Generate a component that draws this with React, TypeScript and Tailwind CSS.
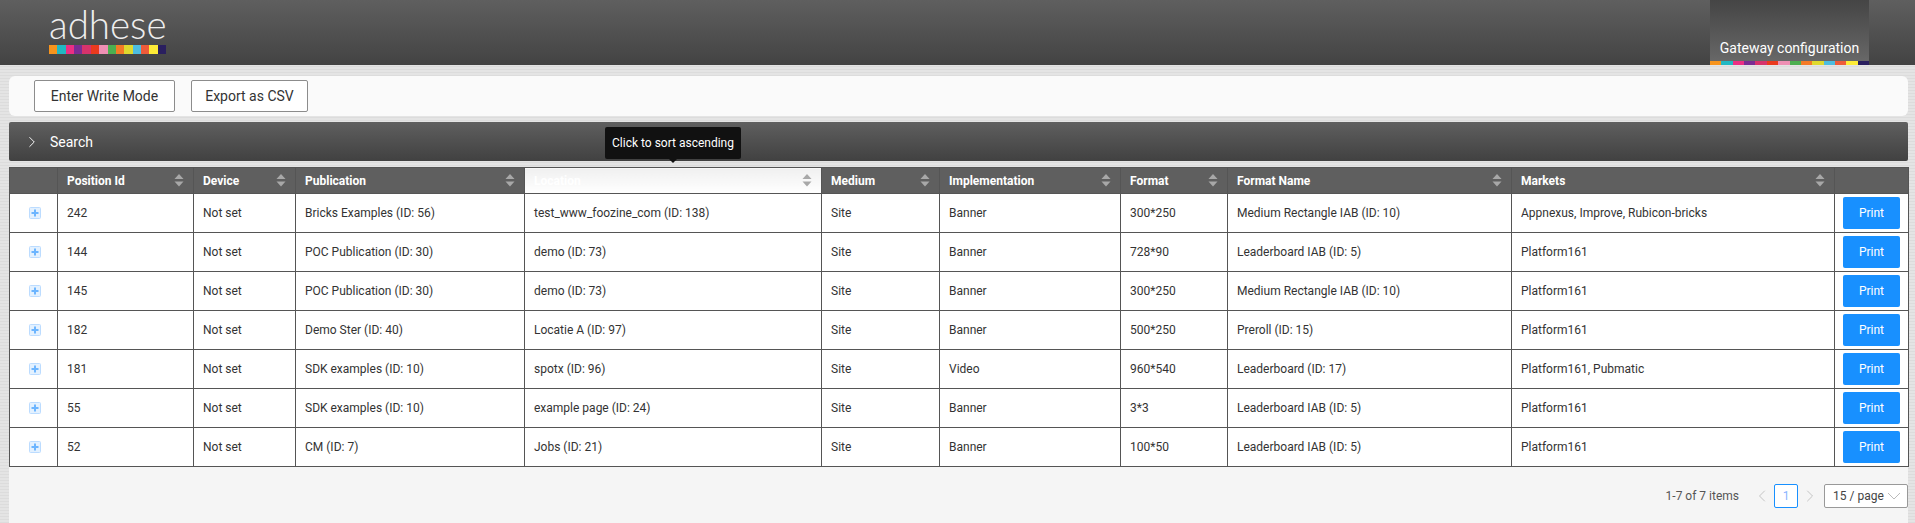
import React from 'react'
import { ChevronLeft, ChevronRight } from 'lucide-react'

const stripe = ['bg-[#f7941d]', 'bg-[#21b8c3]', 'bg-[#ec2f83]', 'bg-[#7b2d93]', 'bg-[#d6336c]', 'bg-[#ea3a1e]', 'bg-[#ee8fb4]', 'bg-[#4caf50]', 'bg-[#f47a26]', 'bg-[#dfd92e]', 'bg-[#4dbde0]', 'bg-[#ee5b3a]', 'bg-[#fdeb37]', 'bg-[#2a1f5f]']

const columns = [
  { name: '', width: 'w-[48px]' },
  { name: 'Position Id', width: 'w-[136px]' },
  { name: 'Device', width: 'w-[102px]' },
  { name: 'Publication', width: 'w-[229px]' },
  { name: 'Location', width: 'w-[297px]' },
  { name: 'Medium', width: 'w-[118px]' },
  { name: 'Implementation', width: 'w-[181px]' },
  { name: 'Format', width: 'w-[107px]' },
  { name: 'Format Name', width: 'w-[284px]' },
  { name: 'Markets', width: 'w-[323px]' },
  { name: '', width: 'w-[74px]' },
]

const rows = [
  ['242', 'Not set', 'Bricks Examples (ID: 56)', 'test_www_foozine_com (ID: 138)', 'Site', 'Banner', '300*250', 'Medium Rectangle IAB (ID: 10)', 'Appnexus, Improve, Rubicon-bricks'],
  ['144', 'Not set', 'POC Publication (ID: 30)', 'demo (ID: 73)', 'Site', 'Banner', '728*90', 'Leaderboard IAB (ID: 5)', 'Platform161'],
  ['145', 'Not set', 'POC Publication (ID: 30)', 'demo (ID: 73)', 'Site', 'Banner', '300*250', 'Medium Rectangle IAB (ID: 10)', 'Platform161'],
  ['182', 'Not set', 'Demo Ster (ID: 40)', 'Locatie A (ID: 97)', 'Site', 'Banner', '500*250', 'Preroll (ID: 15)', 'Platform161'],
  ['181', 'Not set', 'SDK examples (ID: 10)', 'spotx (ID: 96)', 'Site', 'Video', '960*540', 'Leaderboard (ID: 17)', 'Platform161, Pubmatic'],
  ['55', 'Not set', 'SDK examples (ID: 10)', 'example page (ID: 24)', 'Site', 'Banner', '3*3', 'Leaderboard IAB (ID: 5)', 'Platform161'],
  ['52', 'Not set', 'CM (ID: 7)', 'Jobs (ID: 21)', 'Site', 'Banner', '100*50', 'Leaderboard IAB (ID: 5)', 'Platform161'],
]

function SortArrows() {
  return (
    <svg width="10" height="13" viewBox="0 0 10 13" className="shrink-0">
      <path d="M5 0 L9.5 5 H0.5 Z" fill="#a8a8a8" />
      <path d="M5 12.5 L9.5 7.5 H0.5 Z" fill="#a8a8a8" />
    </svg>
  )
}

function ExpandIcon() {
  return (
    <svg width="12" height="12" viewBox="0 0 12 12" className="block">
      <rect x="0.5" y="0.5" width="11" height="11" rx="1" fill="#e3f1ff" stroke="#bcdcff" />
      <path d="M6 2.5 V9.5 M2.5 6 H9.5" stroke="#6cb5ff" strokeWidth="2" />
    </svg>
  )
}

function Header() {
  return (
    <header className="flex h-[65px] justify-between bg-gradient-to-b from-[#5f5f5f] to-[#434343] pl-[49px] pr-[46px]">
      <div className="w-[117px] pt-[2px]">
        <div className="h-[43px] text-center font-['Lato'] text-[38.5px] leading-[44px] font-light text-[#eeeeee]">adhese</div>
        <div className="flex h-[9px]">
          {stripe.map((c, i) => <span key={i} className={`flex-1 ${c}`} />)}
        </div>
      </div>
      <div className="flex w-[159px] flex-col justify-end bg-gradient-to-b from-[#454545] to-[#6a6a6a]">
        <div className="pb-[3px] text-center text-[14px] leading-[20px] text-white">Gateway configuration</div>
        <div className="flex h-[4px]">
          {stripe.map((c, i) => <span key={i} className={`flex-1 ${c}`} />)}
        </div>
      </div>
    </header>
  )
}

function Toolbar() {
  return (
    <div className="flex h-[40px] items-center gap-[16px] rounded-[6px] bg-[#fafafa] pl-[25px]">
      <button className="h-[32px] w-[141px] rounded-[2px] border border-[#8c8c8c] bg-white text-[14px] text-[#333]">Enter Write Mode</button>
      <button className="h-[32px] w-[117px] rounded-[2px] border border-[#8c8c8c] bg-white text-[14px] text-[#333]">Export as CSV</button>
    </div>
  )
}

function SearchBar() {
  return (
    <div className="mt-[6px] flex h-[39px] items-center rounded-[2px] bg-gradient-to-b from-[#5f5f5f] to-[#414141] pt-[1px] pl-[14px] text-[14px] text-white">
      <ChevronRight size={18} strokeWidth={1.25} className="mr-[9px]" />
      Search
    </div>
  )
}

function DataTable() {
  return (
    <div className="relative mt-[6px] bg-[#f5f5f5] pb-[64px]">
      <table className="w-full table-fixed border-collapse text-[12px] text-[#333]">
        <colgroup>
          {columns.map((c, i) => <col key={i} className={c.width} />)}
        </colgroup>
        <thead>
          <tr className="h-[26px]">
            {columns.map((c, i) => (
              <th
                key={i}
                className={`border border-[#555] px-[9px] text-left font-bold ${c.name === 'Location' ? 'bg-gradient-to-b from-[#f0f0f0] to-white text-white' : 'bg-[#5f5f5f] text-white'}`}
              >
                {c.name && (
                  <div className="flex items-center justify-between">
                    {c.name}
                    <SortArrows />
                  </div>
                )}
              </th>
            ))}
          </tr>
        </thead>
        <tbody className="bg-white">
          {rows.map((r) => (
            <tr key={r[0]} className="h-[39px]">
              <td className="border border-[#555] pl-[2px]">
                <div className="flex justify-center"><ExpandIcon /></div>
              </td>
              {r.map((v, i) => <td key={i} className="truncate border border-[#555] px-[9px]">{v}</td>)}
              <td className="border border-[#555] text-center">
                <button className="h-[32px] w-[57px] rounded-[2px] bg-[#1890ff] text-[12px] text-white">Print</button>
              </td>
            </tr>
          ))}
        </tbody>
      </table>

      <div className="absolute top-[-40px] left-[596px] flex h-[32px] w-[136px] items-center justify-center rounded-[2px] bg-[#111] text-[12px] text-white">
        Click to sort ascending
        <span className="absolute bottom-[-4px] left-[64px] h-0 w-0 border-x-[4px] border-t-[4px] border-x-transparent border-t-[#111]" />
      </div>

      <div className="mt-[17px] flex h-[24px] items-center justify-end text-[12px] text-[#555]">
        <span className="mr-[13px]">1-7 of 7 items</span>
        <ChevronLeft size={20} strokeWidth={1} className="text-[#bbb]" />
        <span className="mx-[2px] flex h-[24px] w-[24px] items-center justify-center rounded-[2px] border border-[#1890ff] bg-white text-[#8ab4ff]">1</span>
        <ChevronRight size={20} strokeWidth={1} className="text-[#bbb]" />
        <div className="ml-[4px] flex h-[24px] w-[84px] items-center justify-between rounded-[2px] border border-[#999] bg-white pr-[6px] pl-[8px] text-[#444]">
          15 / page
          <svg width="14" height="8" viewBox="0 0 14 8" fill="none" stroke="#bbb"><path d="M1 1 L7 7 L13 1" /></svg>
        </div>
      </div>
    </div>
  )
}

export default function App() {
  return (
    <div className="h-[523px] overflow-hidden bg-[#dfdfdf] bg-[repeating-linear-gradient(0deg,#dcdcdc_0px,#dcdcdc_1px,#e4e4e4_1px,#e4e4e4_3px)] font-['Roboto',sans-serif]">
      <Header />
      <main className="pt-[11px] pr-[7px] pl-[9px]">
        <Toolbar />
        <SearchBar />
        <DataTable />
      </main>
    </div>
  )
}
